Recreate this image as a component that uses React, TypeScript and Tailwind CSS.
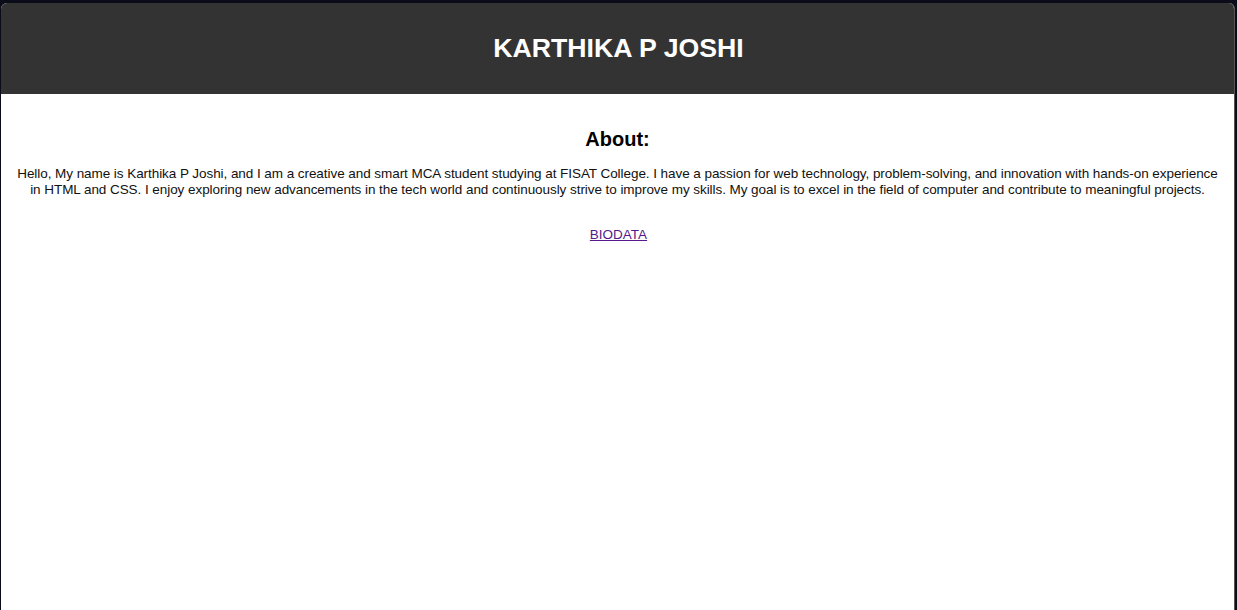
export default function App() {
  return (
    <div className="w-[1237px] h-[610px] bg-[#0a0c1a] pt-[3px] pl-[1px] pr-[2px] overflow-hidden" style={{ fontFamily: '"Liberation Sans", Arial, sans-serif' }}>
      <div className="h-full bg-white rounded-t-[6px] overflow-hidden border-r border-[#555]">
        <header className="h-[91px] bg-[#333333] flex items-center justify-center">
          <h1 className="text-white font-bold text-[26.7px] leading-none pl-[2px]">KARTHIKA P JOSHI</h1>
        </header>
        <main className="text-center text-black px-[8px]">
          <h2 className="font-bold text-[20px] leading-none mt-[35px]">About:</h2>
          <p className="text-[13.5px] leading-[16px] tracking-[-0.06px] mt-[17px] text-[#111]">
            Hello, My name is Karthika P Joshi, and I am a creative and smart MCA student studying at FISAT College. I have a passion for web technology, problem-solving, and innovation with hands-on experience
            <br />
            in HTML and CSS. I enjoy exploring new advancements in the tech world and continuously strive to improve my skills. My goal is to excel in the field of computer and contribute to meaningful projects.
          </p>
          <div className="mt-[24px] pl-[2px]">
            <a href="#" className="text-[13.5px] leading-[16px] text-[#551a8b] underline">BIODATA</a>
          </div>
        </main>
      </div>
    </div>
  );
}
